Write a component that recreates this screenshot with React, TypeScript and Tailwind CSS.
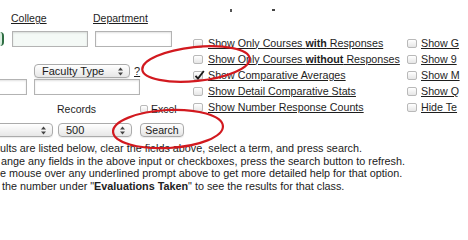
import React from "react";

function Box({ checked, small }: { checked?: boolean; small?: boolean }) {
  return (
    <span
      className={`relative flex shrink-0 items-center justify-center rounded-[2px] border border-[#b9b9b9] bg-linear-to-b from-white to-[#e6e6e6] ${
        small ? "h-[8px] w-[8px]" : "h-[9px] w-[10px]"
      }`}
    >
      {checked && (
        <svg className="absolute left-[0px] top-[-2px]" width="11" height="11" viewBox="0 0 11 11">
          <path d="M1.5 5.8 L4 8.6 L9.8 1" fill="none" stroke="#1c1c1c" strokeWidth="1.9" />
        </svg>
      )}
    </span>
  );
}

function Arrows() {
  return (
    <svg width="5" height="9" viewBox="0 0 5 9" className="shrink-0">
      <path d="M0 3.6 L2.5 0.6 L5 3.6 Z" fill="#444" />
      <path d="M0 5.4 L2.5 8.4 L5 5.4 Z" fill="#444" />
    </svg>
  );
}

function Select({ label, className }: { label?: string; className: string }) {
  return (
    <div
      className={`flex h-[14px] shrink-0 items-center justify-between rounded-[4px] border border-[#ababab] bg-linear-to-b from-white to-[#e7e7e7] pl-[7px] pr-[6px] text-[11px] leading-none text-[#1a1a1a] shadow-[0_1px_1px_rgba(0,0,0,0.08)] ${className}`}
    >
      <span>{label}</span>
      <Arrows />
    </div>
  );
}

function Input({ className }: { className: string }) {
  return (
    <div
      className={`h-[16px] shrink-0 border border-[#b3b3b3] shadow-[inset_0_1px_2px_rgba(0,0,0,0.12)] ${className}`}
    />
  );
}

function LeftForm() {
  return (
    <div className="flex w-[193px] shrink-0 flex-col pt-[12px]">
      <div className="flex h-[13px] items-center text-[10.5px] leading-none">
        <span className="ml-[11px] w-[82px] underline">College</span>
        <span className="underline">Department</span>
      </div>

      <div className="mt-[6px] flex h-[16px]">
        <div className="mt-[1px] h-[14px] w-[4px] shrink-0 rounded-r-[4px] border-r-2 border-[#2f6e43] bg-[#dcefe2]" />
        <Input className="ml-[8px] w-[76px] bg-[#f4f9f6]" />
        <Input className="ml-[7px] w-[77px] bg-white" />
      </div>

      <div className="mt-[17px] flex h-[14px] items-center">
        <Select label="Faculty Type" className="ml-[34px] w-[96px]" />
        <span className="ml-[4px] text-[11px] leading-none underline">?</span>
      </div>

      <div className="mt-[1px] flex h-[16px]">
        <Input className="ml-[-13px] w-[40px] bg-white" />
        <Input className="ml-[7px] w-[106px] bg-white" />
      </div>

      <div className="mt-[8px] flex h-[12px] items-center text-[10.5px] leading-none">
        <span className="w-[140px] shrink-0 pl-[57px]">Records</span>
        <Box small />
        <span className="ml-[3px]">Excel</span>
      </div>

      <div className="mt-[8px] flex h-[14px]">
        <Select className="ml-[-7px] w-[60px]" />
        <Select label="500" className="ml-[5px] w-[74px]" />
        <button
          type="button"
          className="ml-[8px] h-[14px] w-[44px] shrink-0 rounded-[4px] border border-[#a9a9a9] bg-linear-to-b from-white to-[#e5e5e5] text-[10.5px] leading-none text-[#1a1a1a] shadow-[0_1px_1px_rgba(0,0,0,0.08)]"
        >
          Search
        </button>
      </div>
    </div>
  );
}

const firstCol: { label: React.ReactNode; checked?: boolean }[] = [
  { label: <>Show Only Courses <b>with</b> Responses</> },
  { label: <>Show Only Courses <b>without</b> Responses</> },
  { label: "Show Comparative Averages", checked: true },
  { label: "Show Detail Comparative Stats" },
  { label: "Show Number Response Counts" },
];

// only the first letters survive the crop on the right
const secondCol = ["Show G", "Show 9", "Show M", "Show Q", "Hide Te"];

function Marks() {
  return (
    <svg className="pointer-events-none absolute left-0 top-0" width="468" height="220" viewBox="0 0 468 220">
      <ellipse
        cx="196"
        cy="64"
        rx="54"
        ry="17"
        transform="rotate(-6 196 64)"
        fill="none"
        stroke="#d2191f"
        strokeWidth="2.2"
      />
      <ellipse
        cx="168"
        cy="129"
        rx="55"
        ry="19"
        transform="rotate(-3 168 129)"
        fill="none"
        stroke="#d2191f"
        strokeWidth="2.2"
      />
    </svg>
  );
}

export default function App() {
  return (
    <div className="relative h-[220px] w-[468px] overflow-hidden bg-white font-['Liberation_Sans',Arial,sans-serif] text-[#1e1e1e]">
      <div className="flex h-[142px]">
        <LeftForm />

        <div className="flex w-[214px] shrink-0 flex-col">
          <div className="flex h-[35px] items-start pt-[9px]">
            <span className="ml-[37px] h-[3px] w-[2px] bg-[#555]" />
            <span className="ml-[40px] h-[2px] w-[3px] bg-[#444]" />
          </div>
          {firstCol.map((row, i) => (
            <div key={i} className="flex h-[16px] items-center">
              <Box checked={row.checked} />
              <span className="ml-[5px] whitespace-nowrap text-[10.7px] leading-none underline">{row.label}</span>
            </div>
          ))}
        </div>

        <div className="flex w-[56px] shrink-0 flex-col pt-[35px]">
          {secondCol.map((label) => (
            <div key={label} className="flex h-[16px] items-center">
              <Box />
              <span className="ml-[4px] whitespace-nowrap text-[10.7px] leading-none underline">{label}</span>
            </div>
          ))}
        </div>
      </div>

      <div className="whitespace-nowrap text-[10.8px] leading-[12.7px] text-[#222]">
        <p>ults are listed below, clear the fields above, select a term, and press search.</p>
        <p className="ml-[1px]">ange any fields in the above input or checkboxes, press the search button to refresh.</p>
        <p>e mouse over any underlined prompt above to get more detailed help for that option.</p>
        <p className="ml-[2px]">
          the number under "<b>Evaluations Taken</b>" to see the results for that class.
        </p>
      </div>

      <Marks />
    </div>
  );
}
